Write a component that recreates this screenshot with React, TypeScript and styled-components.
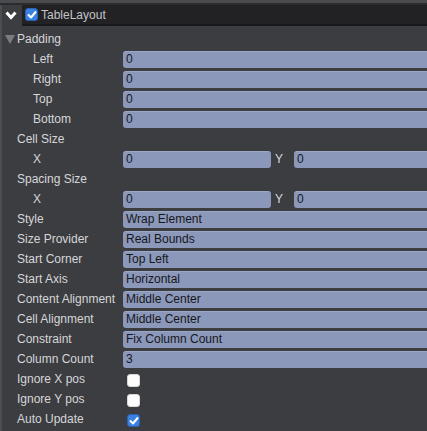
import React from "react";
import styled, { createGlobalStyle } from "styled-components";

const Global = createGlobalStyle`
  html, body { margin: 0; padding: 0; background: #3c3d41; overflow: hidden; }
  body { font-family: "Liberation Sans", Arial, sans-serif; font-size: 12px; }
`;

const Page = styled.div`
  width: 440px;
  height: 431px;
  background: #3c3d41;
  border-left: 2px solid #4c4d51;
  box-sizing: border-box;
`;

const TopStrip = styled.div`
  height: 3px;
  background: #4a4b4f;
  border-bottom: 2px solid #2c2c2f;
  margin-left: -2px;
`;

const HeaderRow = styled.div`
  display: flex;
  align-items: center;
  height: 21px;
  margin-left: -2px;
  margin-bottom: 3px;
`;

const Chevron = styled.div`
  width: 22px;
  display: flex;
  justify-content: center;
  align-items: center;
  height: 100%;
`;

const HeaderBar = styled.div`
  flex: 1;
  height: 100%;
  background: #222124;
  border-bottom: 2px solid #19191b;
  display: flex;
  align-items: center;
  padding-left: 3px;
  gap: 3px;
  box-sizing: border-box;
`;

const Title = styled.span`
  color: #c4c4c6;
  font-size: 12px;
`;

const Row = styled.div`
  display: grid;
  grid-template-columns: 121px 1fr;
  height: 20px;
  align-items: start;
`;

const Label = styled.div<{ $level: number }>`
  padding-left: ${(p) => (p.$level === 1 ? 15 : 31)}px;
  color: #d6d6d8;
  font-size: 12px;
  line-height: 20px;
  white-space: nowrap;
  display: flex;
  align-items: center;
`;

const Triangle = styled.span`
  width: 0;
  height: 0;
  border-left: 5px solid transparent;
  border-right: 5px solid transparent;
  border-top: 9px solid #7b7c80;
  margin-left: -12px;
  margin-right: 2px;
`;

const Field = styled.div`
  margin-top: 2px;
  height: 17px;
  background: #8b98ba;
  border-top: 1px solid #9ca7c5;
  border-radius: 3px;
  box-sizing: border-box;
  color: #17171c;
  font-size: 12px;
  line-height: 15px;
  padding-left: 3px;
  white-space: nowrap;
  overflow: hidden;
`;

const Pair = styled.div`
  display: grid;
  grid-template-columns: 148px 23px 1fr;
  align-items: start;
`;

const AxisLabel = styled.div`
  color: #d6d6d8;
  line-height: 20px;
  padding-left: 4px;
`;

const CheckCell = styled.div`
  padding: 5px 0 0 4px;
`;

const Box = styled.div<{ $checked?: boolean }>`
  width: 13px;
  height: 13px;
  border-radius: 3px;
  box-sizing: border-box;
  background: ${(p) => (p.$checked ? "#3b82e0" : "#fdfdfd")};
  border: 1px solid ${(p) => (p.$checked ? "#2a62b8" : "#d8d8d8")};
  display: flex;
  align-items: center;
  justify-content: center;
`;

const Check = () => (
  <svg width="10" height="9" viewBox="0 0 10 9">
    <path d="M1 4.5 L4 7.5 L9 1.5" stroke="#fff" strokeWidth="2" fill="none" strokeLinejoin="round" />
  </svg>
);

type Item =
  | { kind: "group"; label: string; level: number; caret?: boolean }
  | { kind: "field"; label: string; level: number; value: string }
  | { kind: "pair"; label: string; level: number }
  | { kind: "check"; label: string; level: number; checked: boolean };

const items: Item[] = [
  { kind: "group", label: "Padding", level: 1, caret: true },
  { kind: "field", label: "Left", level: 2, value: "0" },
  { kind: "field", label: "Right", level: 2, value: "0" },
  { kind: "field", label: "Top", level: 2, value: "0" },
  { kind: "field", label: "Bottom", level: 2, value: "0" },
  { kind: "group", label: "Cell Size", level: 1 },
  { kind: "pair", label: "X", level: 2 },
  { kind: "group", label: "Spacing Size", level: 1 },
  { kind: "pair", label: "X", level: 2 },
  { kind: "field", label: "Style", level: 1, value: "Wrap Element" },
  { kind: "field", label: "Size Provider", level: 1, value: "Real Bounds" },
  { kind: "field", label: "Start Corner", level: 1, value: "Top Left" },
  { kind: "field", label: "Start Axis", level: 1, value: "Horizontal" },
  { kind: "field", label: "Content Alignment", level: 1, value: "Middle Center" },
  { kind: "field", label: "Cell Alignment", level: 1, value: "Middle Center" },
  { kind: "field", label: "Constraint", level: 1, value: "Fix Column Count" },
  { kind: "field", label: "Column Count", level: 1, value: "3" },
  { kind: "check", label: "Ignore X pos", level: 1, checked: false },
  { kind: "check", label: "Ignore Y pos", level: 1, checked: false },
  { kind: "check", label: "Auto Update", level: 1, checked: true },
  { kind: "field", label: "", level: 1, value: "" },
];

export default function App() {
  return (
    <>
      <Global />
      <Page>
        <TopStrip />
        <HeaderRow>
          <Chevron>
            <svg width="12" height="9" viewBox="0 0 12 9">
              <path d="M1.5 1.5 L6 6.5 L10.5 1.5" stroke="#fff" strokeWidth="3" fill="none" />
            </svg>
          </Chevron>
          <HeaderBar>
            <Box $checked>
              <Check />
            </Box>
            <Title>TableLayout</Title>
          </HeaderBar>
        </HeaderRow>
        {items.map((it, i) => (
          <Row key={i}>
            <Label $level={it.level}>
              {it.kind === "group" && it.caret && <Triangle />}
              {it.label}
            </Label>
            {it.kind === "field" && <Field>{it.value}</Field>}
            {it.kind === "pair" && (
              <Pair>
                <Field>0</Field>
                <AxisLabel>Y</AxisLabel>
                <Field>0</Field>
              </Pair>
            )}
            {it.kind === "check" && (
              <CheckCell>
                <Box $checked={it.checked}>{it.checked && <Check />}</Box>
              </CheckCell>
            )}
          </Row>
        ))}
      </Page>
    </>
  );
}
